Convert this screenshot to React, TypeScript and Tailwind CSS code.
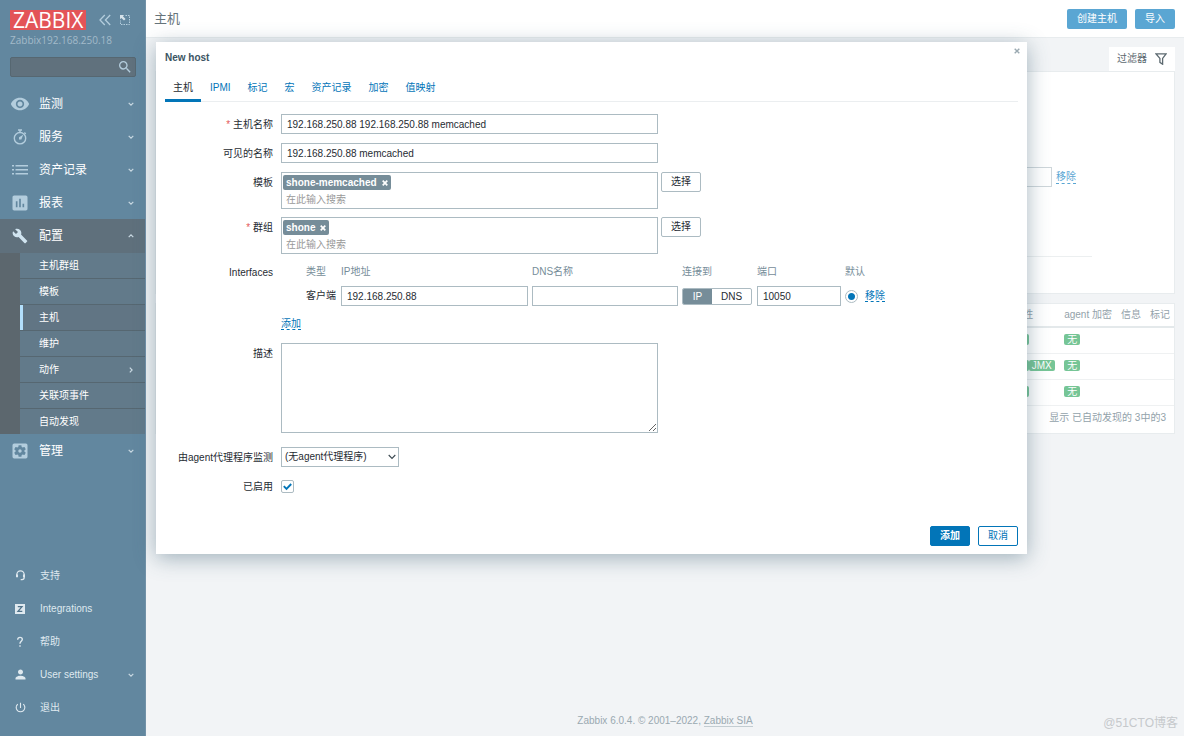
import type { ReactNode } from "react";
import { MdBuild, MdAssessment, MdPerson, MdPowerSettingsNew, MdRemoveRedEye, MdSearch, MdSettingsApplications } from "react-icons/md";

const FIELD = "h-5 border border-[#acbbc2] bg-white px-[5px] text-[#1f2c33] outline-none";

function Chevron({ className = "" }: { className?: string }) {
    return <svg viewBox="0 0 6 6" className={`h-[6px] w-[6px] ${className}`} fill="none" stroke="currentColor" strokeWidth="1.2">
        <path d="M0.7 1.8 3 4.1 5.3 1.8" />
    </svg>
}

function TimerIcon() {
    return <svg viewBox="0 0 16 16" className="h-4 w-4" fill="none" stroke="currentColor" strokeWidth="1.4">
        <circle cx="8" cy="9.2" r="5.7" />
        <path d="M6 1h4M8 1v2.5M12.4 3.6l1.3 1.3" />
        <path d="M11.2 5.8 9.4 10.4 7 10.6 7 8.2Z" fill="currentColor" stroke="none" />
    </svg>
}

function ListIcon() {
    return <svg viewBox="0 0 16 16" className="h-4 w-4" fill="currentColor">
        <path d="M0 3h2v1.6H0zM3.5 3H16v1.6H3.5zM0 7h2v1.6H0zM3.5 7H16v1.6H3.5zM0 11h2v1.6H0zM3.5 11H16v1.6H3.5z" />
    </svg>
}

function HeadsetIcon() {
    return <svg viewBox="0 0 12 12" className="h-[11px] w-[11px]" fill="none" stroke="currentColor" strokeWidth="1.4">
        <path d="M2 7.5V5a4 4 0 0 1 8 0v3.2c0 1.4-.9 2.3-2.3 2.3H6.2" />
        <path d="M2.2 5v3M9.8 5v3" strokeWidth="2.2" />
    </svg>
}

function IntegrationsIcon() {
    return <svg viewBox="0 0 10 10" className="h-[10px] w-[10px]">
        <path d="M0 0h10v10H0z" fill="currentColor" />
        <path d="M2.8 2.6h4.2L3 7.4h4.3" fill="none" stroke="#4f7289" strokeWidth="1.3" />
    </svg>
}

function HelpIcon() {
    return <svg viewBox="0 0 10 12" className="h-3 w-[10px]" fill="none" stroke="currentColor" strokeWidth="1.4">
        <path d="M2.7 3.7C2.7 2.2 3.6 1.4 5 1.4s2.3.8 2.3 2.1C7.3 5.2 5 5.3 5 7.5v.3M5 9.3v1.5" />
    </svg>
}

function KioskIcon() {
    return <svg viewBox="0 0 12 12" className="h-3 w-3" fill="none" stroke="currentColor">
        <path d="M6.5 1.5h4v9h-9v-4" strokeDasharray="1.5 1" />
        <path d="M1 1h4.2L3.9 2.3 6.6 5 5 6.6 2.3 3.9 1 5.2z" fill="#d5e2ea" stroke="none" />
    </svg>
}

const MENU = [
    { label: "监测", icon: <MdRemoveRedEye className="h-5 w-5" /> },
    { label: "服务", icon: <TimerIcon /> },
    { label: "资产记录", icon: <ListIcon /> },
    { label: "报表", icon: <MdAssessment className="h-5 w-5" /> },
];

const SUBMENU = ["主机群组", "模板", "主机", "维护", "动作", "关联项事件", "自动发现"];

const USER_MENU = [
    { label: "支持", icon: <HeadsetIcon /> },
    { label: "Integrations", icon: <IntegrationsIcon /> },
    { label: "帮助", icon: <HelpIcon /> },
    { label: "User settings", icon: <MdPerson className="h-[15px] w-[15px]" />, arrow: true },
    { label: "退出", icon: <MdPowerSettingsNew className="h-[13px] w-[13px]" /> },
];

const TABS = ["主机", "IPMI", "标记", "宏", "资产记录", "加密", "值映射"];

function MenuItem({ label, icon, open }: { label: string; icon: ReactNode; open?: boolean }) {
    return <a href="#" className={`flex items-center pr-[11px] text-[12px] text-white ${open ? "h-[34px] bg-[#5f707c]" : "h-[33px]"}`}>
        <span className={`flex w-[39px] justify-center ${open ? "text-[#d0e4f0]" : "text-[#b3cddd]"}`}>{icon}</span>
        <span className="flex-1">{label}</span>
        <Chevron className={open ? "rotate-180 text-[#c8d8e2]" : "text-[#c8d8e2]"} />
    </a>
}

function Sidebar() {
    return <aside className="flex w-[146px] shrink-0 flex-col border-r border-[#7292a8] bg-[#62879f] pb-3">
        <div className="flex items-center px-[10px] pt-[10px] text-[#b3cddd]">
            <a href="#" className="flex h-5 items-center bg-[#e35458] px-[3px] font-['Open_Sans'] text-[21px] leading-5 text-white">ZABBIX</a>
            <button type="button" aria-label="Collapse" className="ml-[13px]">
                <svg viewBox="0 0 12 12" className="h-3 w-3" fill="none" stroke="currentColor" strokeWidth="1.3">
                    <path d="M5.8 1 1 6l4.8 5M11.2 1 6.4 6l4.8 5" />
                </svg>
            </button>
            <button type="button" aria-label="Kiosk" className="ml-2"><KioskIcon /></button>
        </div>
        <div className="mt-1 px-[10px] font-['Open_Sans'] text-[10px] leading-3 text-[#a3bac9]">Zabbix192.168.250.18</div>
        <div className="ml-[10px] mr-[9px] mt-[11px] flex h-5 items-center rounded-xs border border-[#566771] bg-[#60717d] pr-[2px]">
            <input type="text" aria-label="Search" className="h-full min-w-0 flex-1 bg-transparent px-1 text-white outline-none" />
            <MdSearch className="h-4 w-4 text-[#b3cddd]" />
        </div>
        <nav className="mt-[10px]">
            {MENU.map((item) => <MenuItem key={item.label} {...item} />)}
            <MenuItem label="配置" icon={<MdBuild className="h-4 w-4" />} open />
            <ul className="border-l-20 border-[#5c676e] bg-[#627a8a]">
                {SUBMENU.map((label) => <li key={label} className="border-b border-[#566771] last:border-b-0">
                    <a href="#" className={`flex h-[25px] items-center justify-between border-l-3 pl-4 pr-[11px] text-white ${label === "主机" ? "border-[#b2dffc] bg-[#617584]" : "border-transparent"}`}>
                        {label}
                        {label === "动作" && <Chevron className="-rotate-90 text-[#c8d8e2]" />}
                    </a>
                </li>)}
            </ul>
            <MenuItem label="管理" icon={<MdSettingsApplications className="h-5 w-5" />} />
        </nav>
        <nav className="mt-auto pt-4">
            {USER_MENU.map((item) => <a key={item.label} href="#" className="flex h-[33px] items-center pr-[11px] text-[#dfe9ef]">
                <span className="flex w-10 justify-center">{item.icon}</span>
                <span className="flex-1">{item.label}</span>
                {item.arrow && <Chevron className="text-[#c8d8e2]" />}
            </a>)}
        </nav>
    </aside>
}

function Badge({ children }: { children: ReactNode }) {
    return <span className="inline-block rounded-xs bg-[#76c596] px-[3px] text-[10px] leading-[11px] text-white">{children}</span>
}

function HostsPage() {
    return <div className="flex min-w-0 flex-1 flex-col">
        <header className="flex h-[38px] items-center justify-between border-b border-[#e8ecee] bg-white pl-2 pr-[9px]">
            <h1 className="text-[13px] text-[#66747b]">主机</h1>
            <div className="flex gap-2">
                <button type="button" className="h-5 rounded-xs bg-[#5aa6d3] px-[10px] text-white">创建主机</button>
                <button type="button" className="h-5 rounded-xs bg-[#5aa6d3] px-[10px] text-white">导入</button>
            </div>
        </header>
        <main className="flex flex-1 flex-col px-[9px] pt-[9px]">
            <div className="flex justify-end">
                <a href="#" className="flex h-6 items-center gap-2 bg-white px-2 text-[#5c6970]">
                    过滤器
                    <svg viewBox="0 0 12 12" className="h-3 w-3" fill="none" stroke="currentColor" strokeWidth="1.3">
                        <path d="M.9.8h10.2L7.6 5.4v5.8L4.9 9.4V5.4z" />
                    </svg>
                </a>
            </div>
            <section className="border border-[#e8ecee] bg-white pb-9 pr-[82px] pt-[95px]">
                <div className="flex items-center justify-end gap-1 border-b border-[#eceff0] pb-[69px] pr-4">
                    <input type="text" aria-label="Value" className="h-5 w-24 border border-[#ced6da] bg-white" />
                    <a href="#" className="border-b border-dashed border-[#5aa6d3] leading-3 text-[#5aa6d3]">移除</a>
                </div>
            </section>
            <section className="mt-[9px] border border-[#e8ecee] bg-white pb-[3px]">
                <table className="w-full text-left text-[#93a2aa]">
                    <thead>
                        <tr className="h-[23px] border-b-2 border-[#e4e9eb]">
                            <th className="w-full" />
                            <th className="whitespace-nowrap pr-[31px] font-normal">可用性</th>
                            <th className="whitespace-nowrap pr-[9px] font-normal">agent 加密</th>
                            <th className="whitespace-nowrap pr-[9px] font-normal">信息</th>
                            <th className="whitespace-nowrap pr-1 font-normal">标记</th>
                        </tr>
                    </thead>
                    <tbody>
                        {[false, true, false].map((jmx, i) => <tr key={i} className="h-[26px] border-b border-[#eff1f2]">
                            <td />
                            <td className="whitespace-nowrap"><Badge>ZBX</Badge>{jmx && <Badge>JMX</Badge>}</td>
                            <td><Badge>无</Badge></td>
                            <td />
                            <td />
                        </tr>)}
                    </tbody>
                </table>
                <p className="pr-2 text-right leading-6 text-[#93a2aa]">显示 已自动发现的 3中的3</p>
            </section>
            <footer className="relative mt-auto pb-[7px] text-center text-[#9aa9b1]">
                Zabbix 6.0.4. © 2001–2022, <a href="#" className="border-b border-[#c3cdd2]">Zabbix SIA</a>
                <span className="absolute bottom-[5px] -right-[3px] text-[12px] text-[#c6c9cc]">@51CTO博客</span>
            </footer>
        </main>
    </div>
}

function Row({ label, htmlFor, required, children }: { label: string; htmlFor?: string; required?: boolean; children: ReactNode }) {
    return <div className="flex items-start gap-2">
        <label htmlFor={htmlFor} className="w-[108px] shrink-0 text-right leading-[21px]">
            {required && <span className="text-[#e45959]">* </span>}{label}
        </label>
        <div className="min-w-0">{children}</div>
    </div>
}

function MultiSelect({ id, value }: { id: string; value: string }) {
    return <div className="flex items-start gap-[3px]">
        <div className="w-[377px] border border-[#acbbc2] px-px pt-[2px]">
            <span className="flex w-fit items-center gap-[5px] rounded-xs bg-[#768d99] px-[3px] font-bold leading-[15px] text-white">
                {value}
                <button type="button" aria-label="Remove">
                    <svg viewBox="0 0 6 6" className="h-[6px] w-[6px]" stroke="currentColor" strokeWidth="1.7"><path d="M.7.7l4.6 4.6M5.3.7.7 5.3" /></svg>
                </button>
            </span>
            <input id={id} type="text" placeholder="在此输入搜索" className="block h-[18px] w-full px-[3px] outline-none placeholder:text-[#999]" />
        </div>
        <button type="button" className="h-5 rounded-xs border border-[#acbbc2] px-[9px]">选择</button>
    </div>
}

function Interfaces() {
    return <div className="pb-px">
        <table className="text-left">
            <thead>
                <tr className="h-5 text-[#768d99]">
                    <th className="w-[25px]" />
                    <th className="pr-[5px] font-normal">类型</th>
                    <th className="pr-1 font-normal">IP地址</th>
                    <th className="pr-1 font-normal">DNS名称</th>
                    <th className="pr-[5px] font-normal">连接到</th>
                    <th className="pr-1 font-normal">端口</th>
                    <th className="font-normal">默认</th>
                    <th />
                </tr>
            </thead>
            <tbody>
                <tr className="h-7">
                    <td />
                    <td className="pr-[5px]">客户端</td>
                    <td className="pr-1"><input type="text" aria-label="IP地址" defaultValue="192.168.250.88" className={`${FIELD} block w-[187px]`} /></td>
                    <td className="pr-1"><input type="text" aria-label="DNS名称" className={`${FIELD} block w-[146px]`} /></td>
                    <td className="pr-[5px]">
                        <div className="flex h-[17px] w-[70px] overflow-hidden rounded-xs border border-[#acbbc2]">
                            <button type="button" className="w-[29px] bg-[#768d99] leading-[15px] text-white">IP</button>
                            <button type="button" className="flex-1 leading-[15px]">DNS</button>
                        </div>
                    </td>
                    <td className="pr-1"><input type="text" aria-label="端口" defaultValue="10050" className={`${FIELD} block w-[84px]`} /></td>
                    <td className="pr-px">
                        <input type="radio" aria-label="默认" defaultChecked className="block h-[13px] w-[13px] appearance-none rounded-full border border-[#acbbc2] bg-white bg-radial from-[#0275b8] from-45% to-white to-55% bg-clip-content p-[2px]" />
                    </td>
                    <td><a href="#" className="border-b border-dashed border-[#0275b8] leading-3 text-[#0275b8]">移除</a></td>
                </tr>
            </tbody>
        </table>
        <div className="mt-1 leading-5">
            <a href="#" className="border-b border-dashed border-[#0275b8] text-[#0275b8]">添加</a>
        </div>
    </div>
}

function HostDialog() {
    return <div role="dialog" aria-label="New host" className="absolute left-[156px] right-[157px] top-[42px] bg-white px-[9px] pb-2 pt-[10px] text-[#1f2c33] shadow-[0_4px_20px_rgba(60,95,115,0.45)]">
        <button type="button" aria-label="Close" className="absolute right-[7px] top-[6px] text-[#9aa9b1]">
            <svg viewBox="0 0 6 6" className="h-[6px] w-[6px]" stroke="currentColor" strokeWidth="1.4"><path d="M.7.7l4.6 4.6M5.3.7.7 5.3" /></svg>
        </button>
        <h4 className="font-bold leading-3 text-[#3c5563]">New host</h4>
        <div role="tablist" className="mt-3 flex gap-px border-b border-[#ebeef0]">
            {TABS.map((tab, i) => <button key={tab} type="button" role="tab" aria-selected={i === 0} className={`-mb-px h-[26px] border-b-3 px-2 ${i === 0 ? "border-[#0275b8]" : "border-transparent text-[#0275b8]"}`}>
                {tab}
            </button>)}
        </div>
        <form className="mt-3 flex flex-col gap-2">
            <Row label="主机名称" htmlFor="host" required>
                <input id="host" type="text" defaultValue="192.168.250.88 192.168.250.88 memcached" className={`${FIELD} block w-[377px]`} />
            </Row>
            <Row label="可见的名称" htmlFor="visible-name">
                <input id="visible-name" type="text" defaultValue="192.168.250.88 memcached" className={`${FIELD} block w-[377px]`} />
            </Row>
            <Row label="模板" htmlFor="templates"><MultiSelect id="templates" value="shone-memcached" /></Row>
            <Row label="群组" htmlFor="groups" required><MultiSelect id="groups" value="shone" /></Row>
            <Row label="Interfaces"><Interfaces /></Row>
            <Row label="描述" htmlFor="description">
                <textarea id="description" className="block h-[90px] w-[377px] border border-[#acbbc2] px-[5px] outline-none" />
            </Row>
            <div className="mt-[6px]">
                <Row label="由agent代理程序监测" htmlFor="proxy">
                    <div className="relative">
                        <select id="proxy" className="block h-5 w-[118px] appearance-none border border-[#acbbc2] bg-white px-[3px] outline-none">
                            <option>(无agent代理程序)</option>
                        </select>
                        <svg viewBox="0 0 8 8" className="pointer-events-none absolute right-[3px] top-[6px] h-2 w-2" fill="none" stroke="#3c4a52" strokeWidth="1.1"><path d="M.7 2 4 5.5 7.3 2" /></svg>
                    </div>
                </Row>
            </div>
            <Row label="已启用" htmlFor="enabled">
                <div className="relative mt-1">
                    <input id="enabled" type="checkbox" defaultChecked className="block h-[13px] w-[13px] appearance-none rounded-xs border border-[#acbbc2] bg-white" />
                    <svg viewBox="0 0 9 9" className="pointer-events-none absolute left-[2px] top-[2px] h-[9px] w-[9px]" fill="none" stroke="#0275b8" strokeWidth="1.9"><path d="M.8 4.2 3.5 6.9 8.2 2" /></svg>
                </div>
            </Row>
        </form>
        <div className="mt-[29px] flex justify-end gap-2">
            <button type="button" className="h-5 rounded-xs border border-[#0275b8] bg-[#0275b8] px-[9px] font-bold text-white">添加</button>
            <button type="button" className="h-5 rounded-xs border border-[#0275b8] px-[9px] text-[#0275b8]">取消</button>
        </div>
    </div>
}

export default function App() {
    return <div className="relative flex min-h-screen bg-[#f2f4f6] font-['Liberation_Sans','Noto_Sans_CJK_SC',sans-serif] text-[10px] leading-4">
        <Sidebar />
        <HostsPage />
        <HostDialog />
    </div>
}
